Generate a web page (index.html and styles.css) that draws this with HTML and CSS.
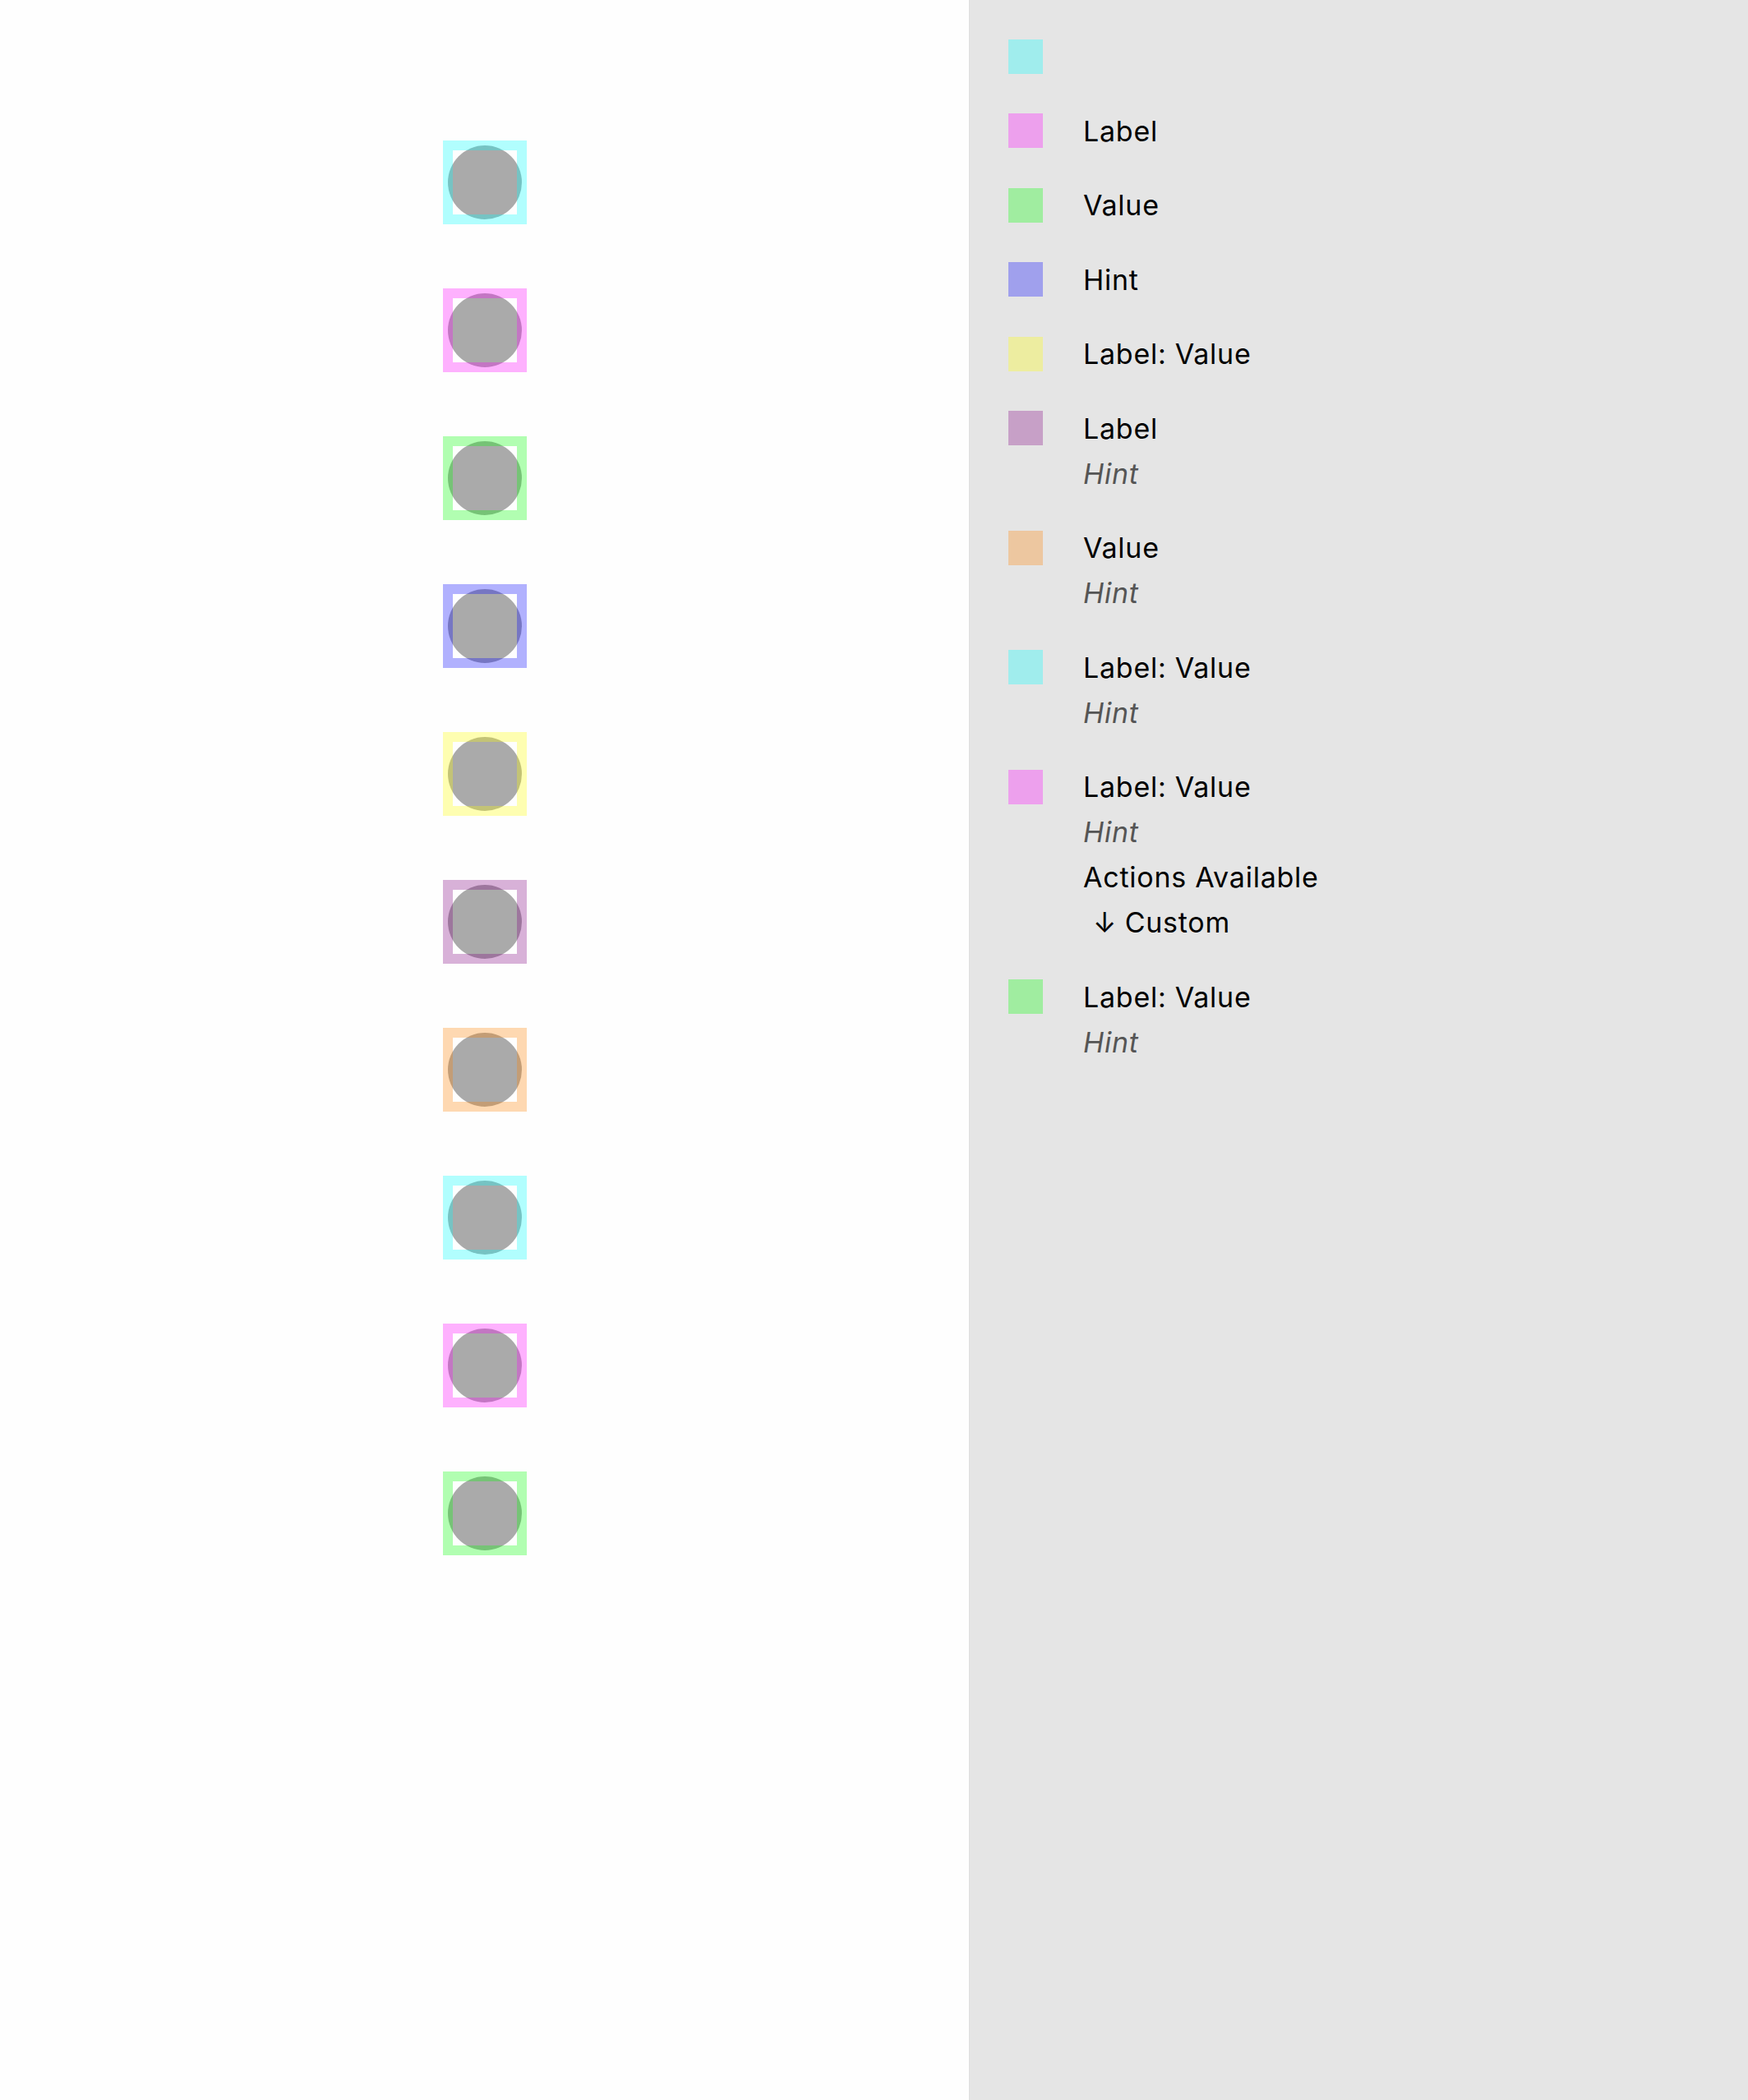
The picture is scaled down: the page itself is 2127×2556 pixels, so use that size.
FILE: index.html
```html
<!DOCTYPE html>
<html lang="en">
<head>
<meta charset="utf-8">
<title>Accessibility preview</title>
<link rel="stylesheet" href="styles.css">
</head>
<body>
<main class="canvas">
  <div class="target c-cyan"><span class="dot"></span></div>
  <div class="target c-magenta"><span class="dot"></span></div>
  <div class="target c-lime"><span class="dot"></span></div>
  <div class="target c-blue"><span class="dot"></span></div>
  <div class="target c-yellow"><span class="dot"></span></div>
  <div class="target c-purple"><span class="dot"></span></div>
  <div class="target c-orange"><span class="dot"></span></div>
  <div class="target c-cyan"><span class="dot"></span></div>
  <div class="target c-magenta"><span class="dot"></span></div>
  <div class="target c-lime"><span class="dot"></span></div>
</main>
<aside class="legend">
  <div class="entry"><span class="swatch c-cyan"></span><div class="lines"><span class="line"></span></div></div>
  <div class="entry"><span class="swatch c-magenta"></span><div class="lines"><span class="line">Label</span></div></div>
  <div class="entry"><span class="swatch c-lime"></span><div class="lines"><span class="line">Value</span></div></div>
  <div class="entry"><span class="swatch c-blue"></span><div class="lines"><span class="line">Hint</span></div></div>
  <div class="entry"><span class="swatch c-yellow"></span><div class="lines"><span class="line">Label: Value</span></div></div>
  <div class="entry"><span class="swatch c-purple"></span><div class="lines"><span class="line">Label</span><span class="line hint">Hint</span></div></div>
  <div class="entry"><span class="swatch c-orange"></span><div class="lines"><span class="line">Value</span><span class="line hint">Hint</span></div></div>
  <div class="entry"><span class="swatch c-cyan"></span><div class="lines"><span class="line">Label: Value</span><span class="line hint">Hint</span></div></div>
  <div class="entry"><span class="swatch c-magenta"></span><div class="lines"><span class="line">Label: Value</span><span class="line hint">Hint</span><span class="line">Actions Available</span><span class="line action"><span class="arrow">↓</span> Custom</span></div></div>
  <div class="entry"><span class="swatch c-lime"></span><div class="lines"><span class="line">Label: Value</span><span class="line hint">Hint</span></div></div>
</aside>
</body>
</html>
```
FILE: styles.css
```css
html, body {
  margin: 0;
  padding: 0;
}

body {
  display: flex;
  min-height: 100vh;
  font-family: Inter, "Noto Sans", "Liberation Sans", sans-serif;
  color: #000;
}

.c-cyan { --tint: rgba(0, 255, 255, 0.3); }
.c-magenta { --tint: rgba(255, 0, 255, 0.3); }
.c-lime { --tint: rgba(0, 255, 0, 0.3); }
.c-blue { --tint: rgba(0, 0, 255, 0.3); }
.c-yellow { --tint: rgba(255, 255, 0, 0.3); }
.c-purple { --tint: rgba(128, 0, 128, 0.3); }
.c-orange { --tint: rgba(255, 128, 0, 0.3); }

.canvas {
  width: 1179px;
  flex: none;
  background: #fefefe;
  display: flex;
  flex-direction: column;
  align-items: center;
  gap: 78px;
  padding-top: 171px;
  box-sizing: border-box;
}

.target {
  position: relative;
  width: 102px;
  height: 102px;
  display: grid;
  place-items: center;
}

.target::after {
  content: "";
  position: absolute;
  inset: 0;
  border: 12px solid var(--tint);
}

.dot {
  width: 90px;
  height: 90px;
  border-radius: 50%;
  background: #aaaaaa;
}

.legend {
  flex: 1;
  background: #e5e5e5;
  border-left: 1px solid #dedede;
  padding: 41px 0 0 47px;
  display: flex;
  flex-direction: column;
  gap: 35.5px;
}

.entry {
  display: flex;
  align-items: flex-start;
  gap: 49px;
}

.swatch {
  flex: none;
  width: 42px;
  height: 42px;
  margin-top: 6.5px;
  background: var(--tint);
}

.lines {
  display: flex;
  flex-direction: column;
  min-height: 55px;
}

.line {
  font-size: 34px;
  line-height: 55px;
  letter-spacing: 0.75px;
  white-space: pre;
}

.hint {
  font-style: italic;
  color: #555555;
}

.action {
  padding-left: 12px;
}

.arrow {
  letter-spacing: 0;
}
```
